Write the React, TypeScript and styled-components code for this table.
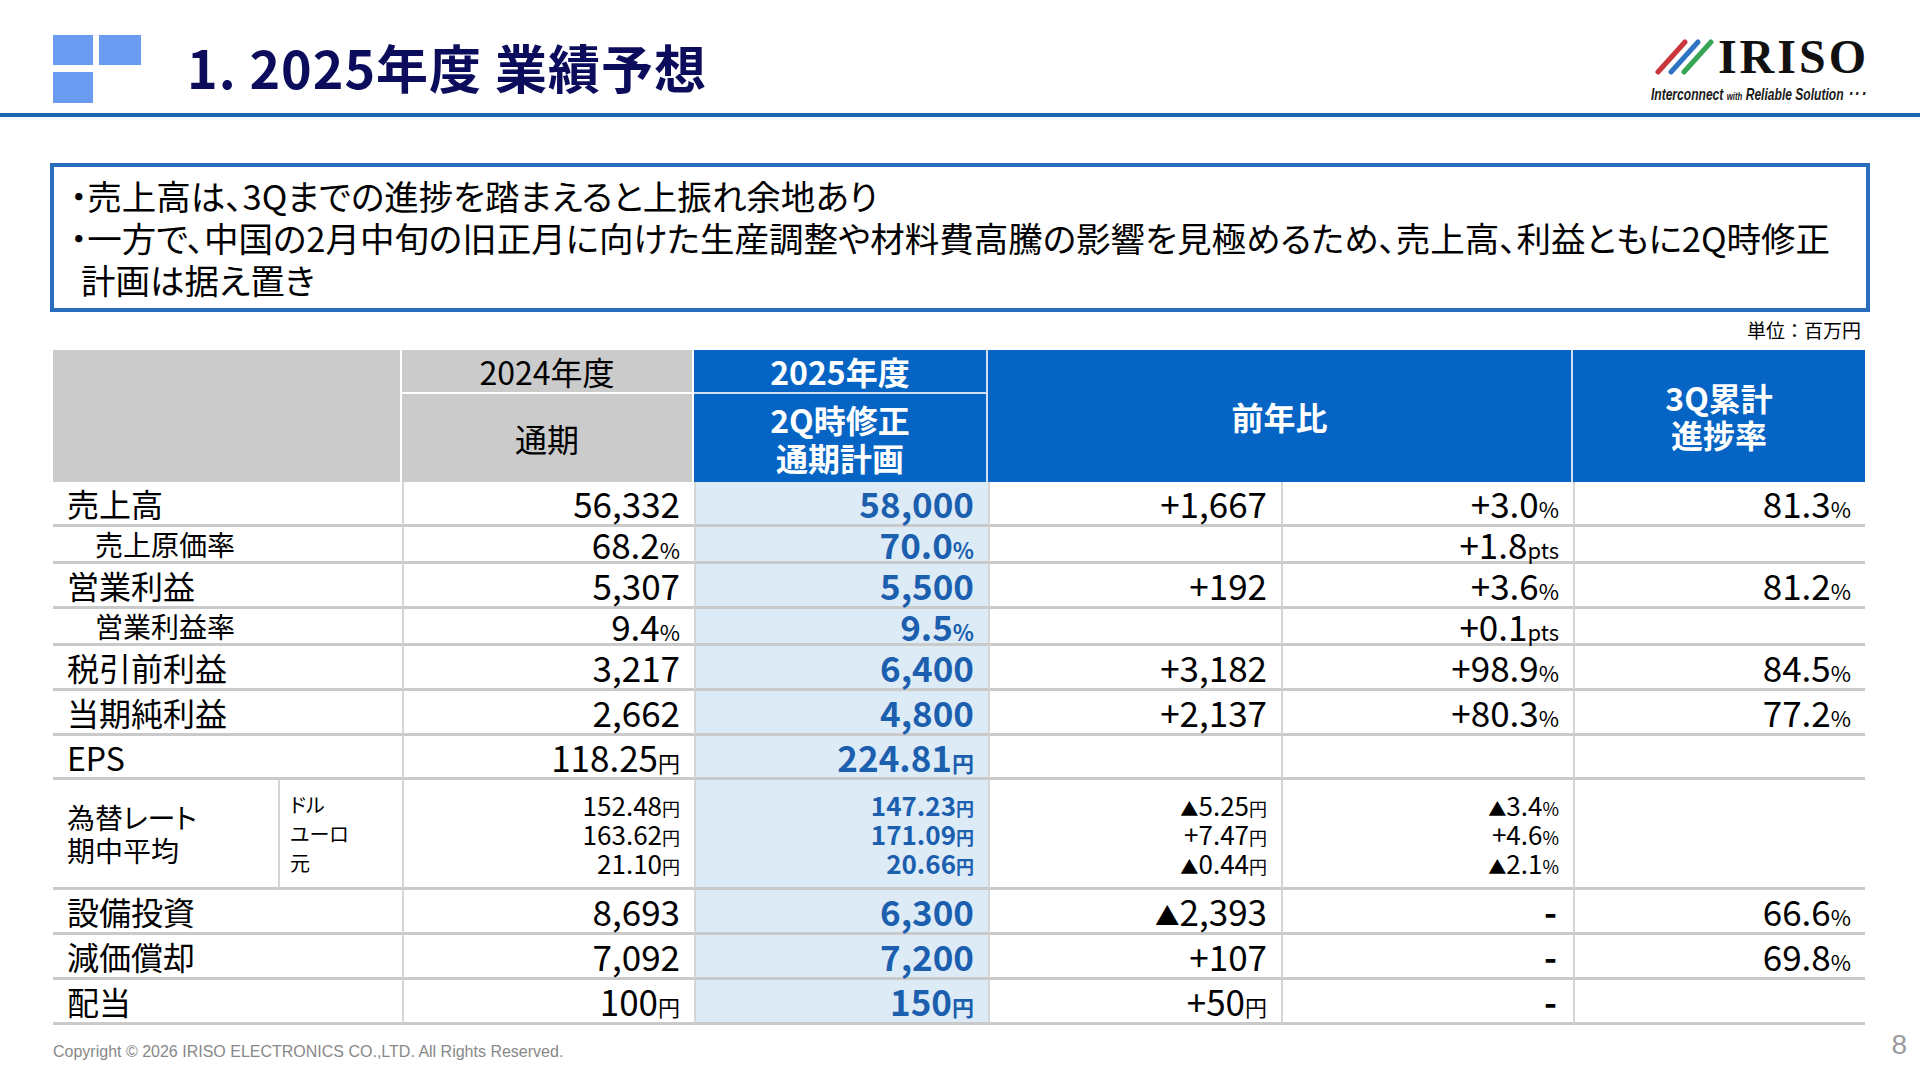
import React from "react";
import styled, { createGlobalStyle } from "styled-components";

const GlobalStyle = createGlobalStyle`
  html, body {
    margin: 0;
    padding: 0;
    background: #fff;
  }
  body {
    font-family: "Noto Sans CJK JP", "Noto Sans", sans-serif;
    font-feature-settings: "palt";
    color: #000;
  }
`;

type Row = { label: string; sub?: boolean; h: number; c: string[] };

const topRows: Row[] = [
  { label: "売上高", h: 45, c: ["56,332", "58,000", "+1,667", "+3.0|%", "81.3|%"] },
  { label: "売上原価率", sub: true, h: 37, c: ["68.2|%", "70.0|%", "", "+1.8|pts", ""] },
  { label: "営業利益", h: 45, c: ["5,307", "5,500", "+192", "+3.6|%", "81.2|%"] },
  { label: "営業利益率", sub: true, h: 37, c: ["9.4|%", "9.5|%", "", "+0.1|pts", ""] },
  { label: "税引前利益", h: 45, c: ["3,217", "6,400", "+3,182", "+98.9|%", "84.5|%"] },
  { label: "当期純利益", h: 45, c: ["2,662", "4,800", "+2,137", "+80.3|%", "77.2|%"] },
  { label: "EPS", h: 44, c: ["118.25|円", "224.81|円", "", "", ""] },
];

const fxRow = {
  label: ["為替レート", "期中平均"],
  kinds: ["ドル", "ユーロ", "元"],
  c: [
    ["152.48|円", "163.62|円", "21.10|円"],
    ["147.23|円", "171.09|円", "20.66|円"],
    ["▲5.25|円", "+7.47|円", "▲0.44|円"],
    ["▲3.4|%", "+4.6|%", "▲2.1|%"],
    [],
  ],
};

const bottomRows: Row[] = [
  { label: "設備投資", h: 45, c: ["8,693", "6,300", "▲2,393", "-", "66.6|%"] },
  { label: "減価償却", h: 45, c: ["7,092", "7,200", "+107", "-", "69.8|%"] },
  { label: "配当", h: 45, c: ["100|円", "150|円", "+50|円", "-", ""] },
];

const Value = ({ text, unitSize }: { text: string; unitSize: number }) => {
  if (!text) return null;
  if (text === "-") return <Dash>-</Dash>;
  const [num, unit] = text.split("|");
  const tri = num.startsWith("▲");
  return (
    <>
      {tri && <Tri>▲</Tri>}
      {tri ? num.slice(1) : num}
      {unit && <Suffix $size={unitSize}>{unit}</Suffix>}
    </>
  );
};

const DataRow = ({ row }: { row: Row }) => (
  <Tr $h={row.h}>
    <Label colSpan={2} $sub={row.sub}>
      {row.label}
    </Label>
    {row.c.map((v, i) => (
      <Cell key={i} $plan={i === 1}>
        <Value text={v} unitSize={22} />
      </Cell>
    ))}
  </Tr>
);

export default function App() {
  return (
    <Slide>
      <GlobalStyle />
      <Header>
        <Mark>
          <MarkCell />
          <MarkCell />
          <MarkCell />
        </Mark>
        <Title>1. 2025年度 業績予想</Title>
        <Logo>
          <LogoRow>
            <svg width="62" height="36" viewBox="0 0 62 36">
              <line x1="5" y1="33" x2="32" y2="3" stroke="#c9363b" strokeWidth="5" strokeLinecap="round" />
              <line x1="18" y1="33" x2="45" y2="3" stroke="#2f73c3" strokeWidth="5" strokeLinecap="round" />
              <line x1="31" y1="33" x2="58" y2="3" stroke="#37a553" strokeWidth="5" strokeLinecap="round" />
            </svg>
            <LogoWord>IRISO</LogoWord>
          </LogoRow>
          <Tagline>
            Interconnect <TagSmall>with</TagSmall> Reliable Solution ･･･
          </Tagline>
        </Logo>
      </Header>

      <Main>
        <Summary>
          <Point>・売上高は、3Qまでの進捗を踏まえると上振れ余地あり</Point>
          <Point>
            ・一方で、中国の2月中旬の旧正月に向けた生産調整や材料費高騰の影響を見極めるため、売上高、利益ともに2Q時修正
            <br />
            計画は据え置き
          </Point>
        </Summary>
        <UnitNote>単位：百万円</UnitNote>

        <Table>
          <colgroup>
            <col style={{ width: 225 }} />
            <col style={{ width: 124 }} />
            <col style={{ width: 292 }} />
            <col style={{ width: 294 }} />
            <col style={{ width: 293 }} />
            <col style={{ width: 292 }} />
            <col style={{ width: 292 }} />
          </colgroup>
          <thead>
            <Tr $h={44}>
              <HeadCell colSpan={2} rowSpan={2} $tone="gray" />
              <HeadCell $tone="gray" $split>
                2024年度
              </HeadCell>
              <HeadCell $tone="blue" $split>
                2025年度
              </HeadCell>
              <HeadCell colSpan={2} rowSpan={2} $tone="blue">
                前年比
              </HeadCell>
              <HeadCell rowSpan={2} $tone="blue" $last $lh={37}>
                3Q累計
                <br />
                進捗率
              </HeadCell>
            </Tr>
            <Tr $h={88}>
              <HeadCell $tone="gray">通期</HeadCell>
              <HeadCell $tone="blue">
                2Q時修正
                <br />
                通期計画
              </HeadCell>
            </Tr>
          </thead>
          <tbody>
            {topRows.map((r) => (
              <DataRow key={r.label} row={r} />
            ))}
            <Tr $h={110}>
              <FxLabel>
                {fxRow.label.map((l) => (
                  <div key={l}>{l}</div>
                ))}
              </FxLabel>
              <FxKinds>
                {fxRow.kinds.map((k) => (
                  <div key={k}>{k}</div>
                ))}
              </FxKinds>
              {fxRow.c.map((lines, i) => (
                <Cell key={i} $plan={i === 1} $small>
                  {lines.map((t) => (
                    <div key={t}>
                      <Value text={t} unitSize={18} />
                    </div>
                  ))}
                </Cell>
              ))}
            </Tr>
            {bottomRows.map((r) => (
              <DataRow key={r.label} row={r} />
            ))}
          </tbody>
        </Table>
      </Main>

      <Footer>
        <Copyright>Copyright © 2026 IRISO ELECTRONICS CO.,LTD. All Rights Reserved.</Copyright>
        <PageNo>8</PageNo>
      </Footer>
    </Slide>
  );
}

/* styles */
const Slide = styled.div`
  width: 1920px;
  height: 1080px;
  overflow: hidden;
  background: #fff;
`;

const Header = styled.header`
  display: flex;
  align-items: flex-start;
  height: 113px;
  padding: 0 54px 0 53px;
  border-bottom: 4px solid #1f66b1;
`;

const Mark = styled.div`
  display: grid;
  grid-template-columns: 40px 42px;
  grid-template-rows: 30px 31px;
  gap: 7px 6px;
  margin-top: 35px;
`;

const MarkCell = styled.span`
  background: #6b9bf0;
`;

const Title = styled.h1`
  margin: 36px 0 0 46px;
  font-size: 52px;
  line-height: 62px;
  font-weight: 700;
  letter-spacing: 1px;
  color: #0c0c5c;
`;

const Logo = styled.div`
  margin: 34px 0 0 auto;
  display: flex;
  flex-direction: column;
  align-items: flex-end;
`;

const LogoRow = styled.div`
  display: flex;
  align-items: center;
  gap: 3px;
`;

const LogoWord = styled.span`
  font-family: "Liberation Serif", serif;
  font-weight: 700;
  font-size: 48px;
  line-height: 46px;
  letter-spacing: 3px;
  margin-right: -3px;
  color: #111;
`;

const Tagline = styled.div`
  margin-top: 6px;
  font-family: "Liberation Sans", Arial, sans-serif;
  font-style: italic;
  font-weight: 700;
  font-size: 17px;
  line-height: 17px;
  color: #1a1a1a;
  white-space: nowrap;
  transform: scaleX(0.71);
  transform-origin: right center;
`;

const TagSmall = styled.span`
  font-size: 11px;
`;

const Main = styled.main`
  padding: 46px 50px 0;
`;

const Summary = styled.section`
  border: 4px solid #2a6dba;
  padding: 7px 20px 8px 27px;
`;

const Point = styled.p`
  margin: 0;
  font-size: 34.5px;
  line-height: 42px;
  text-indent: -11px;
  white-space: nowrap;
`;

const UnitNote = styled.div`
  margin: 8px 9px 0 0;
  text-align: right;
  font-size: 19px;
  line-height: 20px;
  font-feature-settings: normal;
`;

const Table = styled.table`
  width: 1812px;
  margin: 10px 0 0 3px;
  border-collapse: separate;
  border-spacing: 0;
  table-layout: fixed;
`;

const Tr = styled.tr<{ $h: number }>`
  height: ${(p) => p.$h}px;
`;

const HeadCell = styled.th<{ $tone: "gray" | "blue"; $split?: boolean; $last?: boolean; $lh?: number }>`
  padding: 0;
  background: ${(p) => (p.$tone === "gray" ? "#cbcbcb" : "#0564c4")};
  color: ${(p) => (p.$tone === "gray" ? "#000" : "#fff")};
  font-weight: ${(p) => (p.$tone === "gray" ? 400 : 700)};
  font-size: 32px;
  line-height: ${(p) => p.$lh ?? 38}px;
  text-align: center;
  vertical-align: middle;
  border-right: ${(p) => (p.$last ? "none" : `2px solid ${p.$tone === "gray" ? "#fff" : "#cfe0f3"}`)};
  border-bottom: ${(p) => (p.$split ? `2px solid ${p.$tone === "gray" ? "#fff" : "#cfe0f3"}` : "none")};
`;

const Label = styled.td<{ $sub?: boolean }>`
  padding: 0 0 0 ${(p) => (p.$sub ? 42 : 14)}px;
  border-bottom: 3px solid #cacaca;
  font-size: ${(p) => (p.$sub ? 28 : 32)}px;
  line-height: 32px;
  text-align: left;
  vertical-align: middle;
  white-space: nowrap;
`;

const FxLabel = styled(Label)`
  font-size: 28px;
  line-height: 33px;
`;

const FxKinds = styled.td`
  padding: 0 0 0 10px;
  border-bottom: 3px solid #cacaca;
  border-left: 2px solid #d5d5d5;
  font-size: 20px;
  line-height: 29px;
  vertical-align: middle;
  white-space: nowrap;
`;

const Cell = styled.td<{ $plan?: boolean; $small?: boolean }>`
  padding: 0 14px 0 10px;
  border-bottom: 3px solid #cacaca;
  border-left: 2px solid #d5d5d5;
  text-align: right;
  vertical-align: middle;
  white-space: nowrap;
  font-size: ${(p) => (p.$small ? 26 : 35)}px;
  line-height: ${(p) => (p.$small ? 29 : 32)}px;
  font-weight: ${(p) => (p.$plan ? 700 : 400)};
  color: ${(p) => (p.$plan ? "#1b5fae" : "#000")};
  background: ${(p) => (p.$plan ? "#ddebf7" : "transparent")};
`;

const Suffix = styled.span<{ $size: number }>`
  font-size: ${(p) => p.$size}px;
  line-height: 0;
`;

const Tri = styled.span`
  font-size: 0.7em;
  line-height: 0;
`;

const Dash = styled.span`
  font-weight: 700;
  padding-right: 2px;
`;

const Footer = styled.footer`
  display: flex;
  justify-content: space-between;
  align-items: flex-start;
  padding: 0 13px 0 53px;
`;

const Copyright = styled.div`
  margin-top: 17px;
  font-family: "Liberation Sans", Arial, sans-serif;
  font-size: 16px;
  line-height: 20px;
  color: #888;
`;

const PageNo = styled.div`
  margin-top: 6px;
  font-family: "Liberation Sans", Arial, sans-serif;
  font-size: 28px;
  line-height: 28px;
  color: #9b9b9b;
`;
